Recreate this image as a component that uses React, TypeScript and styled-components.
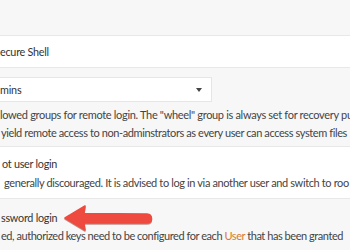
import React from "react";
import styled, { createGlobalStyle } from "styled-components";

const Global = createGlobalStyle`
  html, body { margin: 0; padding: 0; }
  body {
    width: 350px;
    height: 250px;
    overflow: hidden;
    background: #f6f6f6;
    font-family: Lato, "Open Sans", sans-serif;
    color: #3a3a3a;
  }
`;

const Page = styled.div`
  display: flex;
  flex-direction: column;
  width: 350px;
  height: 250px;
  overflow: hidden;
`;

const Band = styled.div<{ $white?: boolean; $h?: number }>`
  position: relative;
  display: flex;
  flex-direction: column;
  box-sizing: border-box;
  height: ${(p) => p.$h ?? 30}px;
  background: ${(p) => (p.$white ? "#ffffff" : "#f7f7f7")};
  border-bottom: 1px solid #e8e8e8;
  flex-shrink: 0;
`;

const Title = styled.div<{ $top: number; $indent?: number }>`
  font-size: 10.8px;
  letter-spacing: -0.25px;
  line-height: 18px;
  color: #333;
  white-space: nowrap;
  margin-top: ${(p) => p.$top}px;
  padding-left: ${(p) => p.$indent ?? 0}px;
`;

const Help = styled.div<{ $top: number; $indent?: number; $ls?: number }>`
  font-size: 11px;
  letter-spacing: ${(p) => p.$ls ?? -0.32}px;
  line-height: 18px;
  color: #444;
  white-space: nowrap;
  margin-top: ${(p) => p.$top}px;
  padding-left: ${(p) => p.$indent ?? 0}px;
`;

const Select = styled.div`
  box-sizing: border-box;
  margin-top: 9px;
  margin-left: -4px;
  width: 216px;
  height: 25px;
  background: #fff;
  border: 1px solid #e6e6e6;
  border-left: none;
  display: flex;
  align-items: center;
  justify-content: space-between;
  padding: 0 9px 0 4px;
  font-size: 10.8px;
  letter-spacing: -0.2px;
  color: #333;
`;

const Caret = styled.span`
  width: 0;
  height: 0;
  border-left: 3.5px solid transparent;
  border-right: 3.5px solid transparent;
  border-top: 4px solid #444;
`;

const Link = styled.span`
  color: #d9782f;
`;

const Arrow = styled.svg`
  position: absolute;
  left: 63px;
  top: 5px;
  filter: drop-shadow(0 1px 0.6px rgba(120, 20, 10, 0.45));
`;

export default function App() {
  return (
    <>
      <Global />
      <Page>
        <Band $h={36} />
        <Band $white $h={32}>
          <Title $top={7}>ecure Shell</Title>
        </Band>
        <Band $h={79}>
          <Select>
            <span>mins</span>
            <Caret />
          </Select>
          <Help $top={4}>lowed groups for remote login. The "wheel" group is always set for recovery pu</Help>
          <Help $top={0} $indent={1} $ls={-0.4}>yield remote access to non-adminstrators as every user can access system files</Help>
        </Band>
        <Band $white $h={52}>
          <Title $top={8} $indent={2}>ot user login</Title>
          <Help $top={1} $indent={4} $ls={-0.37}>generally discouraged. It is advised to log in via another user and switch to roo</Help>
        </Band>
        <Band $h={60}>
          <Title $top={10} $indent={1}>ssword login</Title>
          <Help $top={0} $indent={1} $ls={-0.45}>ed, authorized keys need to be configured for each <Link>User</Link> that has been granted</Help>
          <Arrow width="92" height="28" viewBox="0 0 92 28">
            <path
              d="M2 14 L22 2 L21 9.5 L84 10 Q88.5 10.5 88.5 14.5 Q88.5 19 84 19 L21 19 L22 26 Z"
              fill="#ef4a3f"
              stroke="#ef4a3f"
              strokeWidth="1.5"
              strokeLinejoin="round"
            />
          </Arrow>
        </Band>
      </Page>
    </>
  );
}
